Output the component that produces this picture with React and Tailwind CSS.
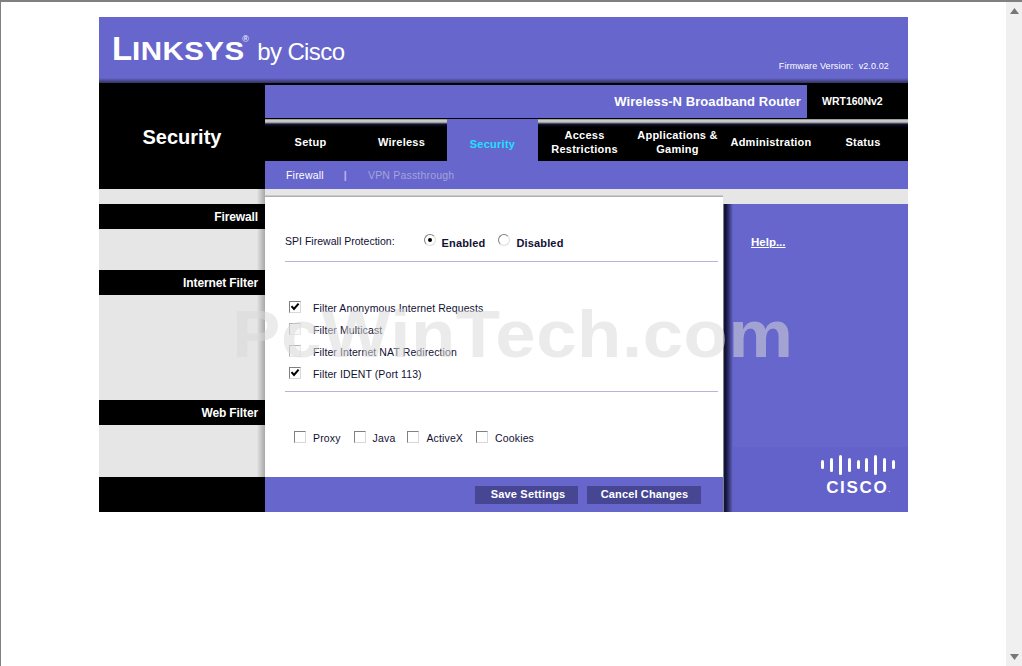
import React from 'react';

const purple = 'bg-[#6666cc]';

const navItems = [
  { label: 'Setup', width: 'w-[91px]' },
  { label: 'Wireless', width: 'w-[91px]' },
  { label: 'Security', width: 'w-[91px]', active: true },
  { label: ['Access', 'Restrictions'], width: 'w-[93px]' },
  { label: ['Applications &', 'Gaming'], width: 'w-[93px]' },
  { label: 'Administration', width: 'w-[94px]' },
  { label: 'Status', width: 'w-[90px]' },
];

// classic windows-looking checkbox
const Check = ({ checked, disabled }) => (
  <span className={`block w-[12px] h-[12px] shrink-0 border-t border-l border-t-[#808080] border-l-[#808080] border-b border-r border-b-[#d8d8d8] border-r-[#d8d8d8] ${disabled ? 'bg-[#f4f4f4] opacity-60' : 'bg-white'}`}>
    {checked && (
      <svg viewBox="0 0 10 10" className="w-[10px] h-[10px]">
        <path d="M1.5 4.2 L4 7 L8.6 1.6" fill="none" stroke="#000" strokeWidth="2" />
      </svg>
    )}
  </span>
);

const Radio = ({ checked }) => (
  <span className="flex items-center justify-center w-[12px] h-[12px] shrink-0 rounded-full border border-t-[#808080] border-l-[#808080] border-b-[#dddddd] border-r-[#dddddd] bg-white">
    {checked && <span className="block w-[4px] h-[4px] rounded-full bg-black" />}
  </span>
);

const SideHeading = ({ children, className }) => (
  <div className={`h-[25px] bg-black flex items-center justify-end pr-[7px] text-white font-bold text-[12px] tracking-[-0.12px] ${className}`}>
    {children}
  </div>
);

const FilterRow = ({ label, checked, disabled }) => (
  <div className="h-[22px] flex items-center pl-[4px]">
    <span className="-mt-[4px]"><Check checked={checked} disabled={disabled} /></span>
    <span className="ml-[12px] text-[10.5px] text-[#111133] tracking-[0.1px]">{label}</span>
  </div>
);

const CiscoLogo = () => {
  const bars = [9, 14, 20, 14, 9, 14, 20, 14, 9];
  return (
    <div className="flex flex-col items-center w-[76px]">
      <div className="flex items-center justify-between w-[74px] h-[21px]">
        {bars.map((h, i) => (
          <span key={i} className="block w-[3px] bg-white rounded-full" style={{ height: h }} />
        ))}
      </div>
      <div className="flex items-start text-white font-bold text-[17px] leading-[15px] tracking-[1.7px] mt-[5px]">
        CISCO<span className="text-[5px] leading-[20px] tracking-normal">.</span>
      </div>
    </div>
  );
};

export default function App() {
  return (
    <div className="relative flex h-[666px] w-[1022px] overflow-hidden bg-white font-['Liberation_Sans',Arial,sans-serif]">
      <div className="flex-1 border-t-2 border-l border-[#808080] pt-[15px] pl-[98px]">
        <div className="w-[809px]">
          {/* logo header */}
          <div className={`relative h-[66px] ${purple} flex items-center justify-between`}>
            <div className="flex items-baseline pl-[13px] -mt-[3px] text-white">
              <span className="flex items-baseline font-bold">
                <span className="text-[33px] leading-none">L</span>
                <span className="text-[25px] leading-none tracking-[0.4px] scale-x-[1.18] origin-left w-[110px]">INKSYS</span>
              </span>
              <span className="text-[9px] self-start mt-[1px] w-[9px]">®</span>
              <span className="text-[24px] leading-none tracking-[-0.6px] ml-[6px]">by Cisco</span>
            </div>
            <div className="self-end pb-[10px] pr-[19px] text-[9px] text-white tracking-[0.12px]">Firmware Version:&nbsp; v2.0.02</div>
            <div className="absolute left-0 right-0 bottom-0 h-[5px] bg-gradient-to-b from-[#6666cc] to-[#33335f]" />
          </div>

          {/* title + navigation */}
          <div className="flex">
            <div className="w-[166px] h-[106px] bg-black flex items-center justify-center text-white font-bold text-[20px] pt-[2px]">
              Security
            </div>
            <div className="flex-1 bg-black">
              <div className="flex h-[33px] mt-[2px]">
                <div className={`flex-1 ${purple} flex items-center justify-end pr-[6px] text-white font-bold text-[13px] tracking-[0.07px]`}>
                  Wireless-N Broadband Router
                </div>
                <div className="w-[101px] bg-black flex items-center pl-[15px] text-white font-bold text-[10.5px]">WRT160Nv2</div>
              </div>
              <div className="h-[1px] bg-black" />
              <div className="flex h-[42px] bg-[linear-gradient(#8a8a8a_0px,#dddddd_2px,#8a8a8a_4px,#14143a_5px,#000000_8px)]">
                {navItems.map((item, i) => (
                  <div key={i} className={`${item.width} flex items-center justify-center text-center font-bold text-[11px] leading-[14px] tracking-[0.25px] ${item.active ? `${purple} text-[#1fe0ff] pt-[7px]` : 'text-white pt-[4px]'}`}>
                    {Array.isArray(item.label) ? (
                      <span>{item.label[0]}<br />{item.label[1]}</span>
                    ) : item.label}
                  </div>
                ))}
              </div>
              <div className={`flex items-center h-[28px] ${purple} text-[10.5px] text-white pl-[21px] pt-[1px] tracking-[0.2px]`}>
                <span>Firewall</span>
                <span className="ml-[20px] text-[#c3b8ea] font-bold">|</span>
                <span className="ml-[21px] text-[#a3a3dd]">VPN Passthrough</span>
              </div>
            </div>
          </div>

          {/* body */}
          <div className="flex h-[323px]">
            <div className="w-[166px] flex flex-col bg-[#e6e6e6]">
              <div className="flex-1 flex flex-col pt-[15px] bg-gradient-to-r from-[#e6e6e6] from-[95%] to-[#a8a8a8]">
                <SideHeading>Firewall</SideHeading>
                <SideHeading className="mt-[41px]">Internet Filter</SideHeading>
                <SideHeading className="mt-[105px]">Web Filter</SideHeading>
              </div>
              <div className="h-[35px] bg-black" />
            </div>

            <div className="w-[458px] flex flex-col bg-[#e6e6e6]">
              <div className="h-[8px] bg-gradient-to-b from-[#e6e6e6] from-[70%] to-[#a0a0a0]" />
              <div className="flex-1 bg-white pl-[20px] pr-[5px] text-[#111133]">
                <div className="h-[65px] flex items-start pt-[37px] border-b border-[#b4b4e0] text-[10.5px]">
                  <span className="tracking-[0.02px]">SPI Firewall Protection:</span>
                  <span className="ml-[29px]"><Radio checked /></span>
                  <span className="ml-[6px] mt-[1px] font-bold text-[11px] tracking-[0.15px]">Enabled</span>
                  <span className="ml-[13px]"><Radio /></span>
                  <span className="ml-[6px] mt-[1px] font-bold text-[11px] tracking-[0.15px]">Disabled</span>
                </div>
                <div className="h-[130px] pt-[36px] border-b border-[#b4b4e0]">
                  <FilterRow label="Filter Anonymous Internet Requests" checked />
                  <FilterRow label="Filter Multicast" disabled />
                  <FilterRow label="Filter Internet NAT Redirection" disabled />
                  <FilterRow label="Filter IDENT (Port 113)" checked />
                </div>
                <div className="flex items-center pt-[39px] pl-[9px] text-[10.5px] tracking-[0.15px]">
                  <span className="-mt-[3px]"><Check /></span><span className="ml-[7px]">Proxy</span>
                  <span className="ml-[13px] -mt-[3px]"><Check /></span><span className="ml-[7px]">Java</span>
                  <span className="ml-[12px] -mt-[3px]"><Check /></span><span className="ml-[7px]">ActiveX</span>
                  <span className="ml-[13px] -mt-[3px]"><Check /></span><span className="ml-[7px]">Cookies</span>
                </div>
              </div>
              <div className={`h-[35px] ${purple} flex items-center justify-end pr-[22px] gap-[9px]`}>
                <div className="h-[18px] w-[103px] bg-[#464693] flex items-center justify-center text-white font-bold text-[11px] tracking-[0.2px] pl-[3px]">Save Settings</div>
                <div className="h-[18px] w-[114px] bg-[#464693] flex items-center justify-center text-white font-bold text-[11px] tracking-[0.15px] pl-[1px]">Cancel Changes</div>
              </div>
            </div>

            <div className="w-[185px] flex flex-col bg-[#e6e6e6]">
              <div className="h-[15px]" />
              <div className={`flex-1 flex ${purple} border-l border-[#808080]`}>
                <div className="w-[9px] bg-gradient-to-r from-[#14143a] from-[20%] to-[#6666cc]" />
                <div className="flex-1 flex flex-col">
                  <div className="flex-1 pt-[31px] pl-[18px] -mt-[6px]">
                    <span className="text-white font-bold text-[11.5px] underline">Help...</span>
                  </div>
                  <div className="h-[65px] bg-[#6361ca] flex justify-end pr-[12px] pt-[7px]">
                    <CiscoLogo />
                  </div>
                </div>
              </div>
            </div>
          </div>
        </div>
      </div>

      {/* scrollbar */}
      <div className="w-[16px] border-t-2 border-[#808080] bg-[#f0f0f0] flex flex-col justify-between items-center py-[6px]">
        <svg width="9" height="6" viewBox="0 0 9 6"><path d="M4.5 0 L9 6 H0 Z" fill="#777" /></svg>
        <svg width="9" height="6" viewBox="0 0 9 6"><path d="M0 0 H9 L4.5 6 Z" fill="#777" /></svg>
      </div>

      {/* watermark */}
      <div className="absolute left-[232px] top-[284px] pointer-events-none font-bold text-[67px] leading-[100px] whitespace-nowrap text-[rgba(217,217,217,0.53)] tracking-[0.5px] scale-x-[1.083] origin-left">
        PcWinTech.com
      </div>
    </div>
  );
}
